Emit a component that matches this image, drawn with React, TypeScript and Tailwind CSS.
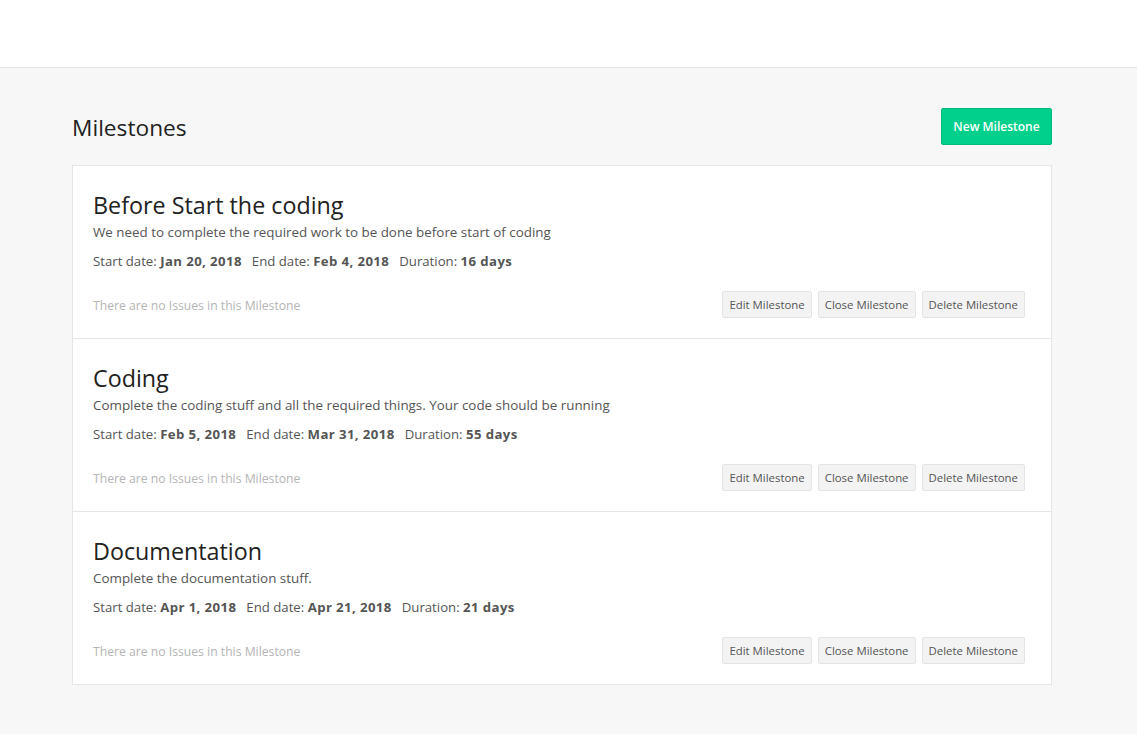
import React from "react";

const items = [
  {
    title: "Before Start the coding",
    desc: "We need to complete the required work to be done before start of coding",
    start: "Jan 20, 2018",
    end: "Feb 4, 2018",
    dur: "16 days",
  },
  {
    title: "Coding",
    desc: "Complete the coding stuff and all the required things. Your code should be running",
    start: "Feb 5, 2018",
    end: "Mar 31, 2018",
    dur: "55 days",
  },
  {
    title: "Documentation",
    desc: "Complete the documentation stuff.",
    start: "Apr 1, 2018",
    end: "Apr 21, 2018",
    dur: "21 days",
  },
];

function Btn({ children }: { children: React.ReactNode }) {
  return (
    <button className="h-[27px] px-[6px] bg-[#f3f3f3] border border-[#e4e4e4] rounded-[2px] text-[11.4px] text-[#555]">
      {children}
    </button>
  );
}

export default function App() {
  return (
    <div
      className="min-h-[734px] bg-[#f7f7f7] text-[#333]"
      style={{ fontFamily: '"Open Sans", "Noto Sans", sans-serif' }}
    >
      <div className="h-[68px] bg-white border-b border-[#e6e6e6]" />
      <div className="w-[980px] ml-[72px] pt-[40px]">
        <div className="flex items-center justify-between h-[37px]">
          <h1 className="text-[22.7px] text-[#222] mt-[3px]">Milestones</h1>
          <button className="h-[37px] w-[111px] bg-[#00d08c] border border-[#00b97c] rounded-[2px] text-white text-[12px] font-semibold">
            New Milestone
          </button>
        </div>
        <div className="mt-[20px] bg-white border border-[#e6e6e6]">
          {items.map((it, i) => (
            <div
              key={i}
              className={`px-[20px] ${i > 0 ? "h-[173px] pt-[22px] border-t border-[#e6e6e6]" : "h-[172px] pt-[22px]"}`}
            >
              <div className="text-[23.3px] leading-[34px] text-[#222]">{it.title}</div>
              <div className="mt-[1px] text-[13.4px] leading-[18px] text-[#555]">{it.desc}</div>
              <div className="mt-[11px] text-[13.2px] leading-[18px] text-[#555]">
                Start date: <b className="font-bold tracking-[0.4px]">{it.start}</b>
                <span className="ml-[10px]">End date: </span>
                <b className="font-bold tracking-[0.4px]">{it.end}</b>
                <span className="ml-[10px]">Duration: </span>
                <b className="font-bold tracking-[0.4px]">{it.dur}</b>
              </div>
              <div className="mt-[21px] flex items-center justify-between pr-[6px]">
                <span className="pt-[4px] text-[12.2px] text-[#b5b5b5]">There are no Issues in this Milestone</span>
                <div className="flex gap-[6px]">
                  <Btn>Edit Milestone</Btn>
                  <Btn>Close Milestone</Btn>
                  <Btn>Delete Milestone</Btn>
                </div>
              </div>
            </div>
          ))}
        </div>
      </div>
    </div>
  );
}
